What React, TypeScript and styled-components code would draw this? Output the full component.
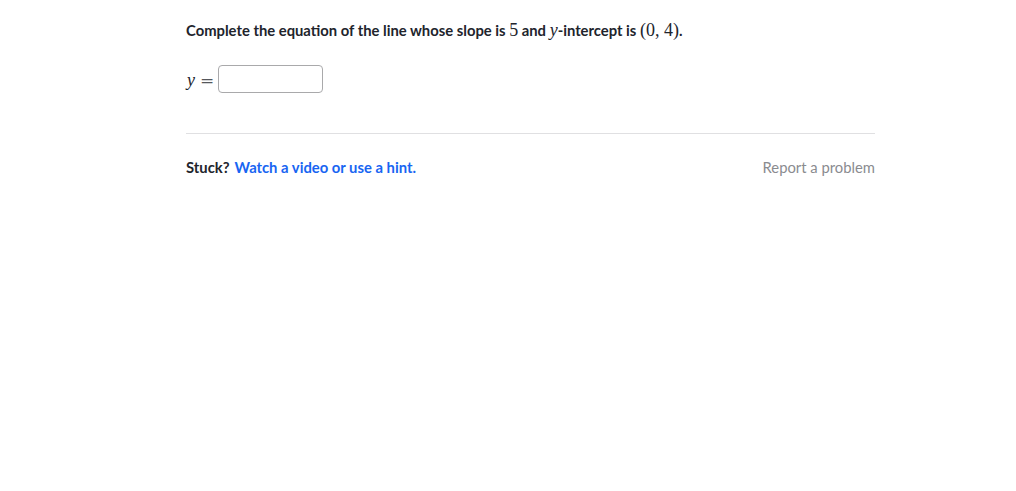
import React from "react";
import styled, { createGlobalStyle } from "styled-components";

const GlobalStyle = createGlobalStyle`
  html, body {
    margin: 0;
    padding: 0;
    background: #ffffff;
  }
  body {
    font-family: Lato, "Noto Sans", sans-serif;
    color: #21242c;
  }
`;

const Page = styled.div`
  width: 689px;
  padding: 20px 0 0 186px;
`;

const Question = styled.p`
  margin: 0;
  font-size: 14.8px;
  line-height: 20px;
  font-weight: 700;
  color: #21242c;
`;

const Math = styled.span<{ italic?: boolean }>`
  font-family: "Liberation Serif", "DejaVu Serif", serif;
  font-weight: 400;
  font-size: 18px;
  font-style: ${(p) => (p.italic ? "italic" : "normal")};
`;

const AnswerRow = styled.div`
  display: flex;
  align-items: center;
  gap: 4px;
  margin-top: 25px;
`;

const Equals = styled.span`
  font-family: "Liberation Serif", "DejaVu Serif", serif;
  font-size: 18px;
  color: #21242c;
  display: flex;
  gap: 5px;
  padding-top: 2px;

  i {
    padding-left: 1px;
  }
`;

const EqualsSign = styled.span`
  font-family: "DejaVu Serif", serif;
  font-size: 17px;
  color: #55575c;
`;

const AnswerInput = styled.input`
  box-sizing: border-box;
  width: 105px;
  height: 28px;
  margin: 0;
  border: 1px solid #a9a9ab;
  border-radius: 4px;
  background: #fff;
  outline: none;
  padding: 0 6px;
`;

const Divider = styled.hr`
  margin: 40px 0 0 0;
  border: none;
  border-top: 1px solid #e0e0e2;
`;

const Footer = styled.div`
  display: flex;
  justify-content: space-between;
  align-items: center;
  margin-top: 23px;
  font-size: 14.8px;
  line-height: 20px;
`;

const Stuck = styled.span`
  color: #21242c;
  font-weight: 700;
`;

const HintLink = styled.a`
  color: #1865f2;
  font-weight: 700;
  text-decoration: none;
  margin-left: 5px;
`;

const Report = styled.a`
  color: #8a8b8f;
  font-weight: 400;
  text-decoration: none;
`;

export default function App() {
  return (
    <>
      <GlobalStyle />
      <Page>
        <Question>
          Complete the equation of the line whose slope is <Math>5</Math> and{" "}
          <Math italic>y</Math>-intercept is <Math>(0, 4)</Math>.
        </Question>
        <AnswerRow>
          <Equals>
            <i>y</i>
            <EqualsSign>=</EqualsSign>
          </Equals>
          <AnswerInput type="text" />
        </AnswerRow>
        <Divider />
        <Footer>
          <div>
            <Stuck>Stuck?</Stuck>
            <HintLink href="#">Watch a video or use a hint.</HintLink>
          </div>
          <Report href="#">Report a problem</Report>
        </Footer>
      </Page>
    </>
  );
}
